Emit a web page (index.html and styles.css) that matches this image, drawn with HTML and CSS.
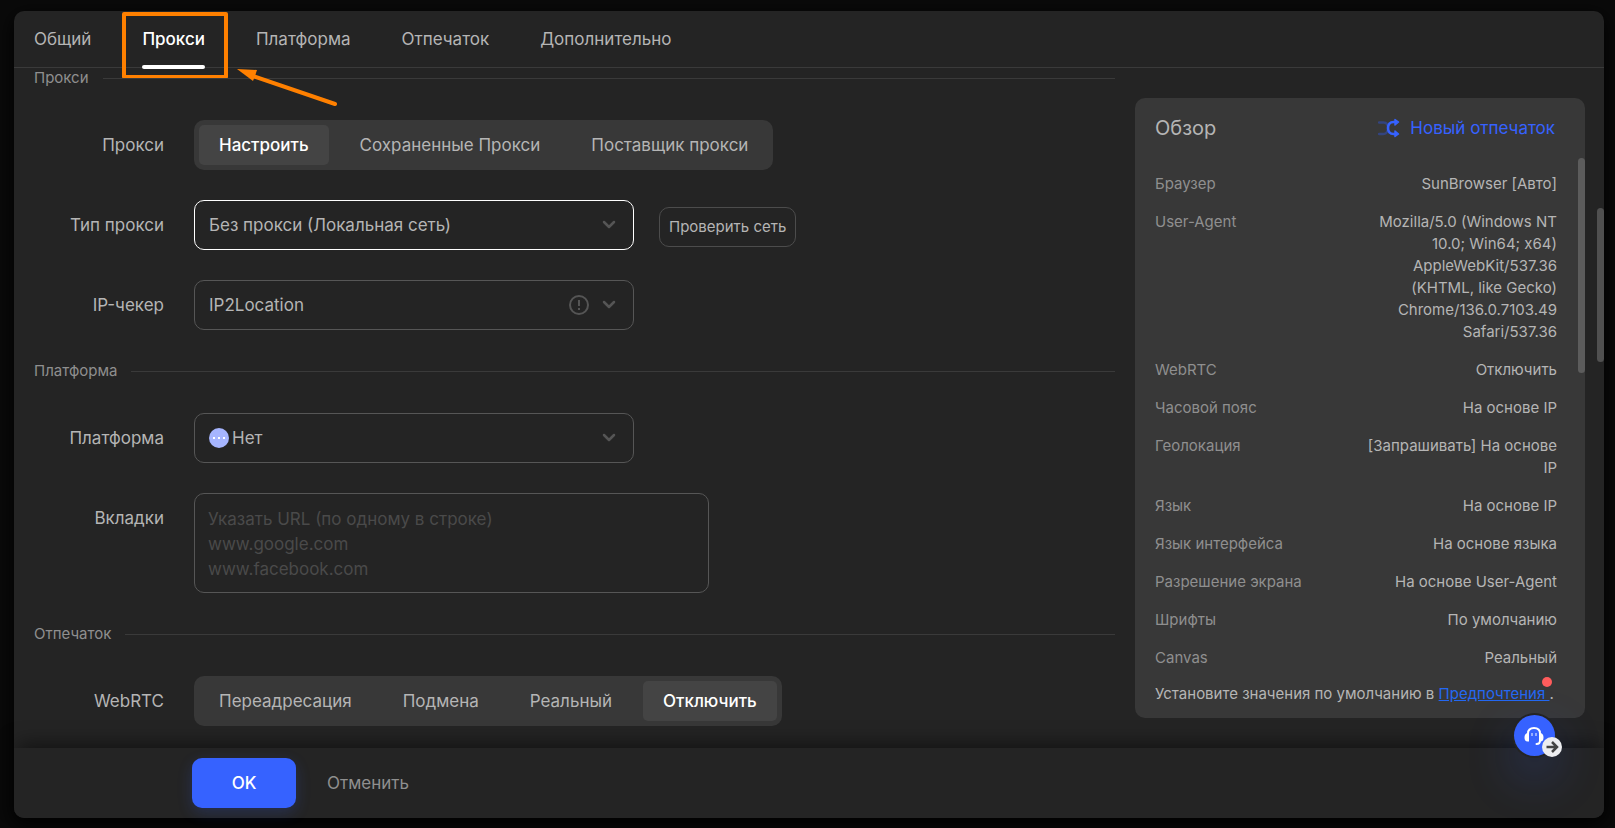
FILE: index.html
```html
<!DOCTYPE html>
<html lang="ru">
<head>
  <meta charset="UTF-8">
  <meta name="viewport" content="width=device-width, initial-scale=1.0">
  <title>Прокси</title>
  <link rel="stylesheet" href="styles.css">
</head>
<body>
  <div class="dialog">
    <nav class="tabs">
      <a class="tab" href="#general">Общий</a>
      <a class="tab active" href="#proxy">Прокси
        <span class="tab-highlight"></span>
        <svg class="tab-arrow" width="104" height="40" viewBox="0 0 104 40">
          <path d="M16 7L98 35" stroke="#ff8000" stroke-width="4" stroke-linecap="round"/>
          <path d="M0 0L20 1L18 7L16 12Z" fill="#ff8000"/>
        </svg>
      </a>
      <a class="tab" href="#platform">Платформа</a>
      <a class="tab" href="#fingerprint">Отпечаток</a>
      <a class="tab" href="#advanced">Дополнительно</a>
    </nav>

    <div class="content">
      <form class="form" id="profile-form">
        <h2 class="section" id="proxy">Прокси</h2>
        <div class="row">
          <span class="label">Прокси</span>
          <div class="segment">
            <button type="button" class="segment-item selected">Настроить</button>
            <button type="button" class="segment-item">Сохраненные Прокси</button>
            <button type="button" class="segment-item">Поставщик прокси</button>
          </div>
        </div>
        <div class="row">
          <label class="label" for="proxy-type">Тип прокси</label>
          <div class="select focused">
            <select id="proxy-type">
              <option>Без прокси (Локальная сеть)</option>
            </select>
            <svg class="chevron" width="14" height="10" viewBox="0 0 14 10"><path d="M2 2l5 5 5-5"/></svg>
          </div>
          <button type="button" class="check-button">Проверить сеть</button>
        </div>
        <div class="row">
          <label class="label" for="ip-checker">IP-чекер</label>
          <div class="select">
            <select id="ip-checker">
              <option>IP2Location</option>
            </select>
            <svg class="info" width="20" height="20" viewBox="0 0 20 20">
              <circle cx="10" cy="10" r="9"/>
              <path d="M10 5v6M10 13v2"/>
            </svg>
            <svg class="chevron" width="14" height="10" viewBox="0 0 14 10"><path d="M2 2l5 5 5-5"/></svg>
          </div>
        </div>

        <h2 class="section" id="platform">Платформа</h2>
        <div class="row">
          <label class="label" for="platform-select">Платформа</label>
          <div class="select with-icon">
            <svg class="platform-icon" width="20" height="20" viewBox="0 0 20 20">
              <circle cx="10" cy="10" r="10" fill="#a6b5ff"/>
              <path d="M4 9h2v2H4zM9 9h2v2H9zM14 9h2v2h-2z" fill="#fff"/>
            </svg>
            <select id="platform-select">
              <option>Нет</option>
            </select>
            <svg class="chevron" width="14" height="10" viewBox="0 0 14 10"><path d="M2 2l5 5 5-5"/></svg>
          </div>
        </div>
        <div class="row">
          <label class="label" for="urls">Вкладки</label>
          <textarea id="urls" class="urls" placeholder="Указать URL (по одному в строке)&#10;www.google.com&#10;www.facebook.com"></textarea>
        </div>

        <h2 class="section" id="fingerprint">Отпечаток</h2>
        <div class="row">
          <span class="label">WebRTC</span>
          <div class="segment">
            <button type="button" class="segment-item">Переадресация</button>
            <button type="button" class="segment-item">Подмена</button>
            <button type="button" class="segment-item">Реальный</button>
            <button type="button" class="segment-item selected">Отключить</button>
          </div>
        </div>
      </form>

      <aside class="overview">
        <div class="overview-head">
          <h2 class="overview-title">Обзор</h2>
          <button type="button" class="new-fingerprint">
            <svg width="22" height="20" viewBox="0 0 22 20" fill="none">
              <path d="M1 4.500h4.500C8.500 4.500 10 7 10 10s-1.500 6-4.500 6H1" stroke="#33447f" stroke-width="2.500" stroke-linecap="round"/>
              <path d="M18 4h-2.500C12 4 10 6.500 10 10s2 6 5.500 6H18" stroke="#3662ff" stroke-width="2.500"/>
              <path d="M17 1.500L20.500 4L17 7zM17 13l3.500 3L17 18.500z" fill="#3662ff" stroke="#3662ff" stroke-width="1.500" stroke-linejoin="round"/>
            </svg>
            Новый отпечаток
          </button>
        </div>
        <dl class="overview-list">
          <div class="item"><dt>Браузер</dt><dd>SunBrowser [Авто]</dd></div>
          <div class="item"><dt>User-Agent</dt><dd>Mozilla/5.0 (Windows NT 10.0; Win64; x64) AppleWebKit/537.36 (KHTML, like Gecko) Chrome/136.0.7103.49 Safari/537.36</dd></div>
          <div class="item"><dt>WebRTC</dt><dd>Отключить</dd></div>
          <div class="item"><dt>Часовой пояс</dt><dd>На основе IP</dd></div>
          <div class="item"><dt>Геолокация</dt><dd>[Запрашивать] На основе IP</dd></div>
          <div class="item"><dt>Язык</dt><dd>На основе IP</dd></div>
          <div class="item"><dt>Язык интерфейса</dt><dd>На основе языка</dd></div>
          <div class="item"><dt>Разрешение экрана</dt><dd>На основе User-Agent</dd></div>
          <div class="item"><dt>Шрифты</dt><dd>По умолчанию</dd></div>
          <div class="item"><dt>Canvas</dt><dd>Реальный</dd></div>
        </dl>
        <p class="overview-note">Установите значения по умолчанию в <a href="#preferences">Предпочтения&nbsp;<span class="dot"></span></a>.</p>
        <span class="thumb overview-thumb"></span>
      </aside>
      <span class="thumb content-thumb"></span>
    </div>

    <footer class="footer">
      <button type="submit" form="profile-form" class="ok">OK</button>
      <button type="button" class="cancel">Отменить</button>
    </footer>

    <button type="button" class="support" aria-label="Поддержка">
      <svg class="headset" width="20" height="20" viewBox="0 0 20 20" fill="none">
        <path d="M4 14V7.500C4 3.500 6 2 10 2s6 1.500 6 5.500v7c0 2.500-1 3.500-3.500 3.500" stroke="#fff" stroke-width="2" stroke-linecap="round"/>
        <path d="M5 7v8.500H3.500C1.500 15.500 0.500 14 0.500 11.500S1.500 7.500 3.500 7zM15 7v8.500h1.500c2 0 3-1.500 3-4s-1-4-3-4.500z" fill="#fff"/>
        <path d="M8 7v3M12 7v3" stroke="#b9c8ff" stroke-width="1.500"/>
      </svg>
      <svg class="support-arrow" width="20" height="20" viewBox="0 0 20 20" fill="none">
        <circle cx="10" cy="10" r="10" fill="#ededf0"/>
        <path d="M4.500 10h10M10 5l5 5-5 5" stroke="#444" stroke-width="2.500"/>
      </svg>
    </button>
  </div>
</body>
</html>
```
FILE: styles.css
```css
* {
  box-sizing: border-box;
}

body {
  margin: 0;
  padding: 11px 11px 10px 14px;
  height: 100vh;
  background-color: #0a0a0a;
  color: #b5b5b5;
  font-family: Inter, "Noto Sans", sans-serif;
  font-size: 17px;
  display: flex;
}

button, select, textarea {
  font: inherit;
  color: inherit;
  background: none;
  border: none;
  margin: 0;
  padding: 0;
}

button {
  cursor: pointer;
}

h2, p, dl, dd {
  margin: 0;
  font-weight: 400;
}

.dialog {
  position: relative;
  flex: 1;
  display: flex;
  flex-direction: column;
  background-color: #242424;
  border-radius: 10px;
  box-shadow: 0 5px 20px #000;
}

/* tabs */
.tabs {
  display: flex;
  gap: 51px;
  padding: 0 20px;
  border-bottom: 1px solid #3a3a3a;
}

.tab {
  position: relative;
  line-height: 56px;
  color: inherit;
  text-decoration: none;
}

.tab.active {
  color: #fff;
  font-weight: 500;
}

.tab.active::after {
  content: "";
  position: absolute;
  left: 0;
  right: 0;
  bottom: -2px;
  height: 4px;
  border-radius: 2px;
  background-color: #fff;
  box-shadow: 0 20px 40px rgba(255, 255, 255, 0.1);
}

.tab-highlight {
  position: absolute;
  top: 1px;
  left: -20px;
  right: -23px;
  height: 67px;
  border: 4px solid #ff8000;
  border-radius: 2px;
}

.tab-arrow {
  position: absolute;
  top: 58px;
  left: calc(100% + 32px);
  z-index: 2;
}

/* content */
.content {
  position: relative;
  flex: 1;
  min-height: 0;
  display: flex;
  gap: 20px;
  padding: 0 19px 0 20px;
}

.form {
  flex: 1;
}

.section {
  display: flex;
  align-items: center;
  gap: 14px;
  margin: 31px 0 32px;
  font-size: 15px;
  line-height: 20px;
  color: #8f8f8f;
}

.section:first-child {
  margin-top: 0;
}

.section::after {
  content: "";
  flex: 1;
  height: 1px;
  background-color: #3a3a3a;
}

.row {
  display: flex;
  align-items: flex-start;
}

.row + .row {
  margin-top: 30px;
}

.label {
  width: 160px;
  padding-right: 30px;
  line-height: 50px;
  text-align: right;
}

.segment {
  display: flex;
  gap: 11px;
  padding: 5px;
  border-radius: 10px;
  background-color: #383838;
}

.segment-item {
  height: 40px;
  padding: 0 20px;
  border-radius: 5px;
}

.segment-item.selected {
  background-color: #444;
  color: #fff;
  font-weight: 500;
}

.select {
  position: relative;
  width: 440px;
}

.select select {
  appearance: none;
  width: 100%;
  height: 50px;
  padding: 0 60px 0 14px;
  border: 1px solid #565656;
  border-radius: 10px;
}

.select.focused select {
  border-color: #fff;
}

.select.with-icon select {
  padding-left: 37px;
}

.chevron {
  position: absolute;
  top: 20px;
  right: 18px;
  fill: none;
  stroke: #555;
  stroke-width: 2.5;
  stroke-linecap: round;
  stroke-linejoin: round;
}

.info {
  position: absolute;
  top: 15px;
  right: 45px;
  fill: none;
  stroke: #555;
  stroke-width: 2;
}

.platform-icon {
  position: absolute;
  top: 15px;
  left: 15px;
}

.check-button {
  height: 40px;
  margin: 7px 0 0 25px;
  padding: 0 9px 2px;
  border: 1px solid #4c4c4c;
  border-radius: 10px;
  font-size: 15px;
}

.urls {
  width: 515px;
  height: 100px;
  padding: 13px 13px 10px;
  border: 1px solid #565656;
  border-radius: 10px;
  line-height: 25px;
  resize: none;
}

.urls::placeholder {
  color: #4a4a4a;
}

/* overview */
.overview {
  position: relative;
  width: 450px;
  margin: 30px 0;
  border-radius: 10px;
  background-color: #383838;
  display: flex;
  flex-direction: column;
}

.overview-head {
  display: flex;
  justify-content: space-between;
  align-items: center;
  height: 60px;
  padding: 0 30px 0 20px;
}

.overview-title {
  font-size: 20px;
}

.new-fingerprint {
  display: flex;
  align-items: center;
  gap: 10px;
  color: #3662ff;
}

.overview-list {
  flex: 1;
  min-height: 0;
  overflow: hidden;
  display: flex;
  flex-direction: column;
  gap: 16px;
  padding: 15px 28px 0 20px;
  font-size: 15px;
  line-height: 22px;
}

.item {
  display: flex;
  justify-content: space-between;
}

.item dt {
  color: #8f8f8f;
}

.item dd {
  width: 190px;
  text-align: right;
}

.overview-note {
  padding: 12px 20px 13px;
  font-size: 15px;
  line-height: 22px;
}

.overview-note a {
  position: relative;
  color: #2468f2;
}

.dot {
  position: absolute;
  top: -7px;
  right: -3px;
  width: 10px;
  height: 10px;
  border-radius: 50%;
  background-color: #ff5c5c;
}

.thumb {
  position: absolute;
  right: 0;
  width: 7px;
  border-radius: 4px;
  background-color: #5c5c5c;
}

.overview-thumb {
  top: 60px;
  height: 215px;
}

.content-thumb {
  top: 140px;
  height: 154px;
  background-color: #505050;
}

/* footer */
.footer {
  position: relative;
  display: flex;
  align-items: center;
  gap: 31px;
  height: 70px;
  padding-left: 178px;
  border-radius: 0 0 10px 10px;
  background-color: #242424;
  box-shadow: 0 -8px 20px -4px rgba(0, 0, 0, 0.5);
}

.ok {
  width: 104px;
  height: 50px;
  border-radius: 10px;
  background-color: #3662ff;
  box-shadow: 0 5px 15px rgba(54, 98, 255, 0.2);
  color: #fff;
  font-weight: 500;
}

.cancel {
  color: #8f8f8f;
}

.support {
  position: absolute;
  right: 49px;
  bottom: 62px;
  width: 41px;
  height: 41px;
  border-radius: 50%;
  background-color: #3662ff;
  box-shadow: 0 0 0 2px #242424, 0 20px 50px rgba(54, 98, 255, 0.3);
}

.headset {
  position: absolute;
  top: 11px;
  left: 10px;
}

.support-arrow {
  position: absolute;
  right: -7px;
  bottom: -1px;
}
```
